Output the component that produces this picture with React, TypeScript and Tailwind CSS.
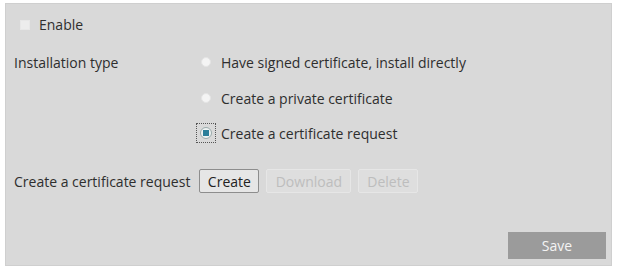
import React from "react";

const Radio: React.FC<{ checked?: boolean }> = ({ checked }) =>
  checked ? (
    <span className="flex h-[20px] w-[20px] items-center justify-center border border-dotted border-[#555]">
      <span className="flex h-[12px] w-[12px] items-center justify-center rounded-full border border-[#9aa] bg-[#eef2f2]">
        <span className="h-[6px] w-[6px] bg-[#2b7f9a]" />
      </span>
    </span>
  ) : (
    <span className="flex h-[20px] w-[20px] items-center justify-center">
      <span className="h-[10px] w-[10px] rounded-full border border-[#e4e4e4] bg-[#f4f4f4]" />
    </span>
  );

const App: React.FC = () => {
  return (
    <div className="h-[271px] w-[618px] bg-white pl-[5px] pr-[6px] pt-[3px] pb-[5px] font-['Open_Sans',sans-serif] text-[14px] text-[#2e2e2e]">
      <div className="flex h-full flex-col border border-[#cfcfcf] bg-[#d9d9d9]">
        <div className="flex h-[40px] items-center gap-[9px] pl-[14px] pt-[1px]">
          <span className="h-[10px] w-[10px] border border-[#e8e8e8] bg-[#ededed]" />
          <span>Enable</span>
        </div>
        <div className="flex">
          <div className="w-[190px] pl-[8px] pt-[8px]">Installation type</div>
          <div className="flex flex-col">
            <div className="flex h-[36px] items-center gap-[5px]">
              <Radio />
              <span>Have signed certificate, install directly</span>
            </div>
            <div className="flex h-[36px] items-center gap-[5px]">
              <Radio />
              <span>Create a private certificate</span>
            </div>
            <div className="flex h-[34px] items-center gap-[5px]">
              <Radio checked />
              <span>Create a certificate request</span>
            </div>
          </div>
        </div>
        <div className="mt-[19px] flex items-center gap-[7px] pl-[8px]">
          <span className="mr-[2px]">Create a certificate request</span>
          <button className="h-[24px] w-[60px] rounded-[2px] border border-[#8d8d8d] bg-[#e6e6e6] text-[#222]">
            Create
          </button>
          <button className="h-[24px] w-[85px] rounded-[2px] border border-[#e6e6e6] bg-[#dedede] text-[#bdbdbd]">
            Download
          </button>
          <button className="h-[24px] w-[60px] rounded-[2px] border border-[#e6e6e6] bg-[#dedede] text-[#bdbdbd]">
            Delete
          </button>
        </div>
        <div className="mt-auto flex justify-end pb-[6px] pr-[5px]">
          <button className="h-[27px] w-[98px] bg-[#9b9b9b] text-[#f4f4f4]">Save</button>
        </div>
      </div>
    </div>
  );
};

export default App;
